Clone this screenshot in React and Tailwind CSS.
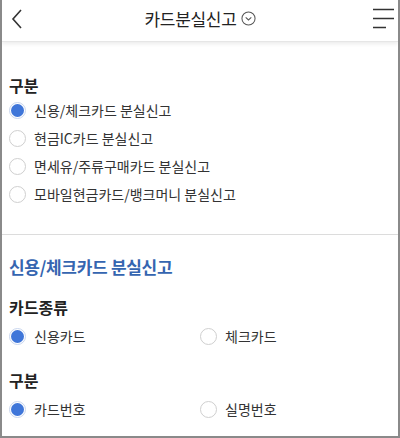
import React, { useState } from 'react';

function Radio({ checked, label, onClick }) {
  return (
    <button type="button" onClick={onClick} className="flex items-center gap-[8px] h-[28px] text-left">
      <span
        className={`w-[17px] h-[17px] rounded-full flex items-center justify-center shrink-0 border ${
          checked ? 'border-[#c9d6ee]' : 'border-[#cfcfcf]'
        }`}
      >
        {checked && <span className="w-[13px] h-[13px] rounded-full bg-[#3f76d9]" />}
      </span>
      <span className="text-[14px] text-[#333] leading-none">{label}</span>
    </button>
  );
}

export default function App() {
  const [type, setType] = useState(0);
  const [kind, setKind] = useState(0);
  const [div, setDiv] = useState(0);

  const types = ['신용/체크카드 분실신고', '현금IC카드 분실신고', '면세유/주류구매카드 분실신고', '모바일현금카드/뱅크머니 분실신고'];

  return (
    <div
      className="w-[400px] h-[438px] border-2 border-t-0 border-[#8a8a8a] bg-white overflow-hidden"
      style={{ fontFamily: '"Noto Sans CJK KR", "Noto Sans", sans-serif' }}
    >
      {/* Header */}
      <div className="relative h-[42px] flex items-center justify-center border-b border-[#e6e6e6] shadow-[0_2px_4px_rgba(0,0,0,0.08)]">
        <svg className="absolute left-[8px] top-[8px]" width="14" height="22" viewBox="0 0 14 22" fill="none">
          <path d="M11 2 L3 11 L11 20" stroke="#333" strokeWidth="1.6" />
        </svg>
        <div className="flex items-center gap-[4px] -mt-[4px]">
          <span className="text-[17px] text-[#222] tracking-[-0.3px]">카드분실신고</span>
          <svg width="15" height="15" viewBox="0 0 16 16" fill="none">
            <circle cx="8" cy="8" r="7" stroke="#555" strokeWidth="1.1" />
            <path d="M5 6.8 L8 9.6 L11 6.8" stroke="#555" strokeWidth="1.1" />
          </svg>
        </div>
        <svg className="absolute left-[369px] top-[8px]" width="24" height="22" viewBox="0 0 24 22" fill="none">
          <path d="M2 1.5 H23 M2 10.5 H23 M2 19.5 H15" stroke="#333" strokeWidth="1.4" />
        </svg>
      </div>

      {/* 구분 */}
      <div className="px-[7px] pt-[32px] pb-[26px] border-b border-[#dcdcdc]">
        <div className="text-[16px] font-bold text-[#222] leading-[22px]">구분</div>
        <div className="flex flex-col">
          {types.map((t, i) => (
            <Radio key={t} label={t} checked={type === i} onClick={() => setType(i)} />
          ))}
        </div>
      </div>

      {/* Form */}
      <div className="px-[7px] pt-[19px]">
        <div className="text-[17px] font-bold text-[#3565b0] leading-[26px] tracking-[-0.3px]">신용/체크카드 분실신고</div>

        <div className="text-[16px] font-bold text-[#222] mt-[16px] leading-[22px]">카드종류</div>
        <div className="grid grid-cols-2 mt-[4px]">
          <Radio label="신용카드" checked={kind === 0} onClick={() => setKind(0)} />
          <Radio label="체크카드" checked={kind === 1} onClick={() => setKind(1)} />
        </div>

        <div className="text-[16px] font-bold text-[#222] mt-[19px] leading-[22px]">구분</div>
        <div className="grid grid-cols-2 mt-[4px]">
          <Radio label="카드번호" checked={div === 0} onClick={() => setDiv(0)} />
          <Radio label="실명번호" checked={div === 1} onClick={() => setDiv(1)} />
        </div>
      </div>
    </div>
  );
}
